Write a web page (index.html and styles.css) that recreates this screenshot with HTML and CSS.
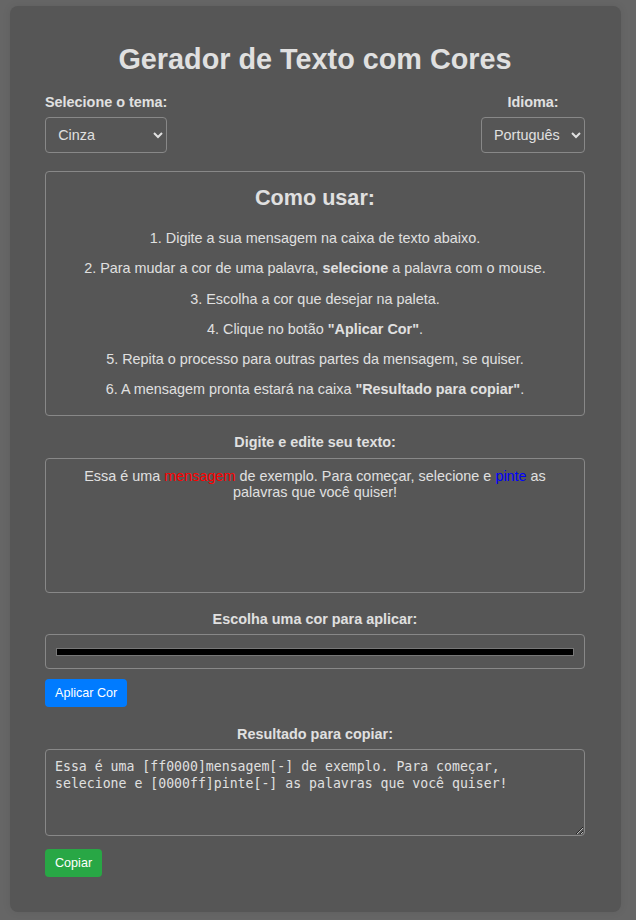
FILE: index.html
```html
<!DOCTYPE html>
<html lang="pt-BR">
<head>
<meta charset="utf-8">
<title>Gerador de Texto com Cores</title>
<link rel="stylesheet" href="styles.css">
</head>
<body>
<div class="container">
  <h1 class="title">Gerador de Texto com Cores</h1>

  <div class="top-row">
    <div class="field">
      <label class="label" for="tema">Selecione o tema:</label>
      <select id="tema" class="select theme-select">
        <option>Cinza</option>
        <option>Escuro</option>
        <option>Claro</option>
      </select>
    </div>
    <div class="field">
      <label class="label" for="idioma">Idioma:</label>
      <select id="idioma" class="select lang-select">
        <option>Português</option>
        <option>English</option>
        <option>Español</option>
      </select>
    </div>
  </div>

  <div class="howto">
    <h2 class="howto-title">Como usar:</h2>
    <p class="step first">1. Digite a sua mensagem na caixa de texto abaixo.</p>
    <p class="step">2. Para mudar a cor de uma palavra, <b>selecione</b> a palavra com o mouse.</p>
    <p class="step">3. Escolha a cor que desejar na paleta.</p>
    <p class="step">4. Clique no botão <b>"Aplicar Cor"</b>.</p>
    <p class="step">5. Repita o processo para outras partes da mensagem, se quiser.</p>
    <p class="step">6. A mensagem pronta estará na caixa <b>"Resultado para copiar"</b>.</p>
  </div>

  <div class="section">
    <div class="section-label">Digite e edite seu texto:</div>
    <div class="editor" contenteditable="true"><span>Essa é uma </span><span class="red">mensagem</span><span> de exemplo. Para começar, selecione e </span><span class="blue">pinte</span><span> as</span><br><span>palavras que você quiser!</span></div>
  </div>

  <div class="section">
    <div class="section-label">Escolha uma cor para aplicar:</div>
    <input type="color" class="color-input" value="#000000">
  </div>

  <button class="btn btn-blue" type="button">Aplicar Cor</button>

  <div class="section section-result">
    <div class="section-label">Resultado para copiar:</div>
    <textarea class="result" readonly>Essa é uma [ff0000]mensagem[-] de exemplo. Para começar, selecione e [0000ff]pinte[-] as palavras que você quiser!</textarea>
  </div>

  <button class="btn btn-green" type="button">Copiar</button>
</div>
</body>
</html>
```

FILE: styles.css
```css
html, body {
  margin: 0;
  padding: 0;
  background: #666666;
}

body {
  font-family: "Liberation Sans", Arial, sans-serif;
  font-size: 14.4px;
  color: #e0e0e0;
  padding: 6px 15px 8px 10px;
}

.container {
  background: #565656;
  border-radius: 8px;
  padding: 18px 36px 35px 35px;
  display: flex;
  flex-direction: column;
  align-items: stretch;
  box-shadow: 0 0 8px rgba(0, 0, 0, 0.08);
}

.title {
  margin: 18.5px 0 18.5px;
  font-size: 28.8px;
  line-height: 33px;
  font-weight: bold;
  text-align: center;
  color: #e0e0e0;
}

.top-row {
  display: flex;
  justify-content: space-between;
  align-items: flex-start;
}

.field {
  display: flex;
  flex-direction: column;
  align-items: center;
  gap: 6.5px;
}

.label,
.section-label {
  font-weight: bold;
  font-size: 14.4px;
  line-height: 16.5px;
  color: #e0e0e0;
}

.select {
  height: 36px;
  box-sizing: border-box;
  border: 1px solid #888888;
  border-radius: 4px;
  background-color: #565656;
  color: #e0e0e0;
  font-family: "Liberation Sans", Arial, sans-serif;
  font-size: 14.4px;
  padding: 0 6px 0 8px;
}

.theme-select { width: 122px; }
.lang-select { width: 104px; }

.howto {
  margin-top: 18px;
  border: 1px solid #888888;
  border-radius: 4px;
  padding: 13.5px 20px 17.5px;
  text-align: center;
}

.howto-title {
  margin: 0;
  font-size: 21.6px;
  line-height: 24.8px;
  font-weight: bold;
  color: #e0e0e0;
}

.step {
  margin: 13.8px 0 0;
  font-size: 14.4px;
  line-height: 16.5px;
}

.step.first { margin-top: 19.7px; }

.section {
  margin-top: 18px;
  display: flex;
  flex-direction: column;
  align-items: stretch;
  gap: 7px;
}

.section-label { text-align: center; }

.editor {
  height: 135px;
  box-sizing: border-box;
  border: 1px solid #888888;
  border-radius: 4px;
  padding: 9px 10px;
  text-align: center;
  font-size: 14.4px;
  line-height: 16px;
  color: #e0e0e0;
  outline: none;
}

.red { color: #ff0000; }
.blue { color: #0000ff; }

.color-input {
  display: block;
  width: 100%;
  height: 35px;
  box-sizing: border-box;
  margin: 0;
  border: 1px solid #888888;
  border-radius: 4px;
  background-color: #565656;
  padding: 13px 10px 12px;
  cursor: pointer;
}

.color-input::-webkit-color-swatch-wrapper {
  padding: 0;
}

.color-input::-webkit-color-swatch {
  border: 1px solid #777777;
  border-radius: 0;
}

.btn {
  align-self: flex-start;
  border: none;
  border-radius: 4px;
  color: #ffffff;
  font-family: "Liberation Sans", Arial, sans-serif;
  font-size: 12.6px;
  line-height: 14px;
  padding: 7px 10px;
  height: 28px;
  box-sizing: border-box;
  cursor: pointer;
}

.btn-blue {
  margin-top: 10px;
  background: #007bff;
}

.btn-green {
  margin-top: 13px;
  background: #28a745;
}

.section-result {
  margin-top: 19px;
  gap: 6.5px;
}

.result {
  display: block;
  width: 100%;
  height: 87px;
  box-sizing: border-box;
  margin: 0;
  border: 1px solid #888888;
  border-radius: 4px;
  background: #565656;
  color: #e0e0e0;
  padding: 9px;
  font-family: "DejaVu Sans Mono", "Liberation Mono", monospace;
  font-size: 13.2px;
  line-height: 16.5px;
  resize: vertical;
  outline: none;
}
```
